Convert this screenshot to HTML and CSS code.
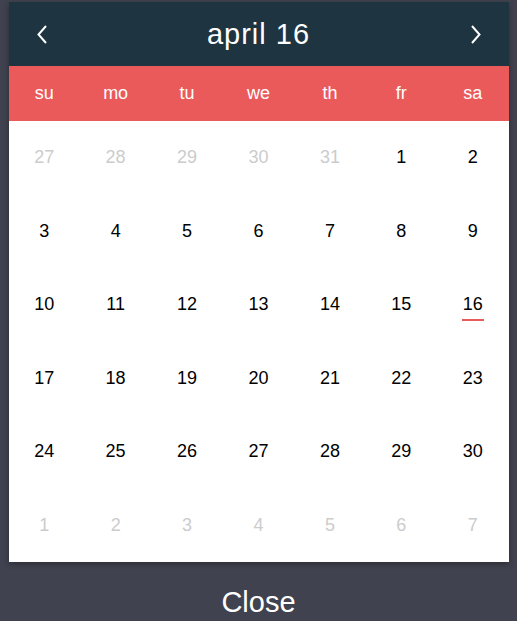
FILE: index.html
```html
<!DOCTYPE html>
<html lang="en">
<head>
  <meta charset="UTF-8">
  <title>Date picker</title>
  <meta name="viewport" content="width=device-width, initial-scale=1">
  <link rel="stylesheet" href="styles.css">
</head>
<body>
  <div class="picker">
    <div class="month-bar">
      <button class="nav" aria-label="previous month">
        <svg viewBox="0 0 10 19" width="10" height="19"><polyline points="9,1 1.5,9.5 9,18" fill="none" stroke="#fff" stroke-width="2"/></svg>
      </button>
      <span class="month">april 16</span>
      <button class="nav" aria-label="next month">
        <svg viewBox="0 0 10 19" width="10" height="19"><polyline points="1,1 8.5,9.5 1,18" fill="none" stroke="#fff" stroke-width="2"/></svg>
      </button>
    </div>
    <div class="weekdays">
      <span>su</span><span>mo</span><span>tu</span><span>we</span><span>th</span><span>fr</span><span>sa</span>
    </div>
    <div class="days">
      <span class="day muted">27</span><span class="day muted">28</span><span class="day muted">29</span><span class="day muted">30</span><span class="day muted">31</span><span class="day">1</span><span class="day">2</span>
      <span class="day">3</span><span class="day">4</span><span class="day">5</span><span class="day">6</span><span class="day">7</span><span class="day">8</span><span class="day">9</span>
      <span class="day">10</span><span class="day">11</span><span class="day">12</span><span class="day">13</span><span class="day">14</span><span class="day">15</span><span class="day"><span class="today">16</span></span>
      <span class="day">17</span><span class="day">18</span><span class="day">19</span><span class="day">20</span><span class="day">21</span><span class="day">22</span><span class="day">23</span>
      <span class="day">24</span><span class="day">25</span><span class="day">26</span><span class="day">27</span><span class="day">28</span><span class="day">29</span><span class="day">30</span>
      <span class="day muted">1</span><span class="day muted">2</span><span class="day muted">3</span><span class="day muted">4</span><span class="day muted">5</span><span class="day muted">6</span><span class="day muted">7</span>
    </div>
  </div>
  <div class="close">Close</div>
</body>
</html>
```

FILE: styles.css
```css
body {
  margin: 0;
  min-height: 100vh;
  background: #40424f;
  font-family: 'Liberation Sans', Arial, sans-serif;
  color: #000;
}
.picker {
  width: 500px;
  margin: 2px auto 0 auto;
  background: #fff;
  box-shadow: 0 2px 6px rgba(0,0,0,0.35);
}
.month-bar {
  height: 64px;
  background: #1e3440;
  display: flex;
  align-items: center;
  justify-content: space-between;
  padding: 0 28px;
}
.nav {
  background: none;
  border: 0;
  padding: 0;
  width: 10px;
  height: 19px;
  display: flex;
}
.month {
  color: #fff;
  font-size: 29px;
  letter-spacing: 1px;
}
.weekdays {
  height: 55px;
  background: #ea5a5a;
  display: grid;
  grid-template-columns: repeat(7, 1fr);
  align-items: center;
  justify-items: center;
  color: #fff;
  font-size: 18px;
}
.days {
  height: 441px;
  display: grid;
  grid-template-columns: repeat(7, 1fr);
  grid-template-rows: repeat(6, 1fr);
  font-size: 18px;
}
.day {
  display: flex;
  align-items: center;
  justify-content: center;
}
.day.muted { color: #cccccc; }
.today {
  position: relative;
}
.today::after {
  content: '';
  position: absolute;
  left: -1px;
  right: -1px;
  top: 100%;
  margin-top: 4px;
  height: 2px;
  background: #ea5a5a;
}
.close {
  text-align: center;
  color: #fff;
  font-size: 29px;
  margin-top: 24px;
}
```
